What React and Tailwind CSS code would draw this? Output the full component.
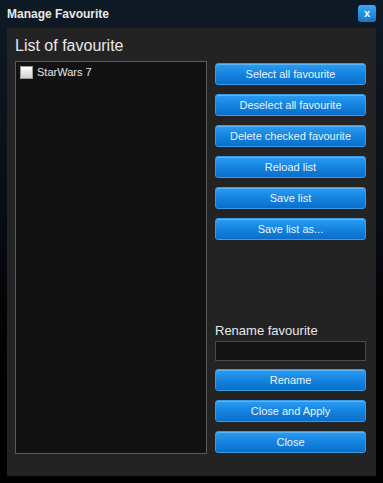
const TOP_BUTTONS = [
  'Select all favourite',
  'Deselect all favourite',
  'Delete checked favourite',
  'Reload list',
  'Save list',
  'Save list as...',
];

const BOTTOM_BUTTONS = ['Rename', 'Close and Apply', 'Close'];

function BlueButton({ label }) {
  return (
    <button
      type="button"
      className="flex h-[22px] w-full items-center justify-center rounded-[3px] border border-[#3a9ae6] bg-gradient-to-b from-[#2b9cf2] via-[#1484e0] to-[#0a6ecb] text-[11px] leading-none text-[#eaf3fc] shadow-[inset_0_1px_0_rgba(255,255,255,0.25)]"
    >
      {label}
    </button>
  );
}

export default function App() {
  return (
    <div
      className="flex h-[483px] w-[383px] flex-col bg-gradient-to-b from-[#0e1a26] via-[#070b10] to-[#000000] text-[#e6e6e6]"
      style={{ fontFamily: '"Liberation Sans", sans-serif' }}
    >
      <div className="flex h-[28px] items-center justify-between pl-[7px] pr-[7px]">
        <span className="text-[12px] font-bold text-[#e8e8e8]">Manage Favourite</span>
        <button
          type="button"
          className="mb-[1px] flex h-[17px] w-[18px] items-center justify-center rounded-[3px] bg-gradient-to-b from-[#3aa6f0] to-[#1278d0] text-[11px] font-bold leading-none text-white"
        >
          x
        </button>
      </div>

      <div className="mx-[7px] flex h-[448px] flex-col bg-[#232323] px-[8px] pb-[22px]">
        <h1 className="flex h-[33px] items-center pt-[2px] text-[16px] font-normal text-[#e8e8e8]">
          List of favourite
        </h1>
        <div className="flex flex-1 gap-[8px]">
          <div className="w-[192px] border border-[#5a5a5a] bg-[#121212] px-[4px] pt-[3px]">
            <label className="flex items-center gap-[4px] text-[11px] leading-[14px] text-[#e6e6e6]">
              <span className="h-[13px] w-[13px] border border-[#999] bg-gradient-to-b from-[#ffffff] to-[#cfcfcf]" />
              StarWars 7
            </label>
          </div>
          <div className="flex w-[151px] flex-col justify-between pb-[1px] pt-[2px]">
            <div className="flex flex-col gap-[9px]">
              {TOP_BUTTONS.map((b) => (
                <BlueButton key={b} label={b} />
              ))}
            </div>
            <div className="flex flex-col">
              <span className="mb-[2px] text-[13px] leading-[16px] text-[#e8e8e8]">Rename favourite</span>
              <input
                type="text"
                className="mb-[8px] h-[20px] w-full border border-[#4a4a4a] bg-[#141414] outline-none"
              />
              <div className="flex flex-col gap-[9px]">
                {BOTTOM_BUTTONS.map((b) => (
                  <BlueButton key={b} label={b} />
                ))}
              </div>
            </div>
          </div>
        </div>
      </div>
    </div>
  );
}
